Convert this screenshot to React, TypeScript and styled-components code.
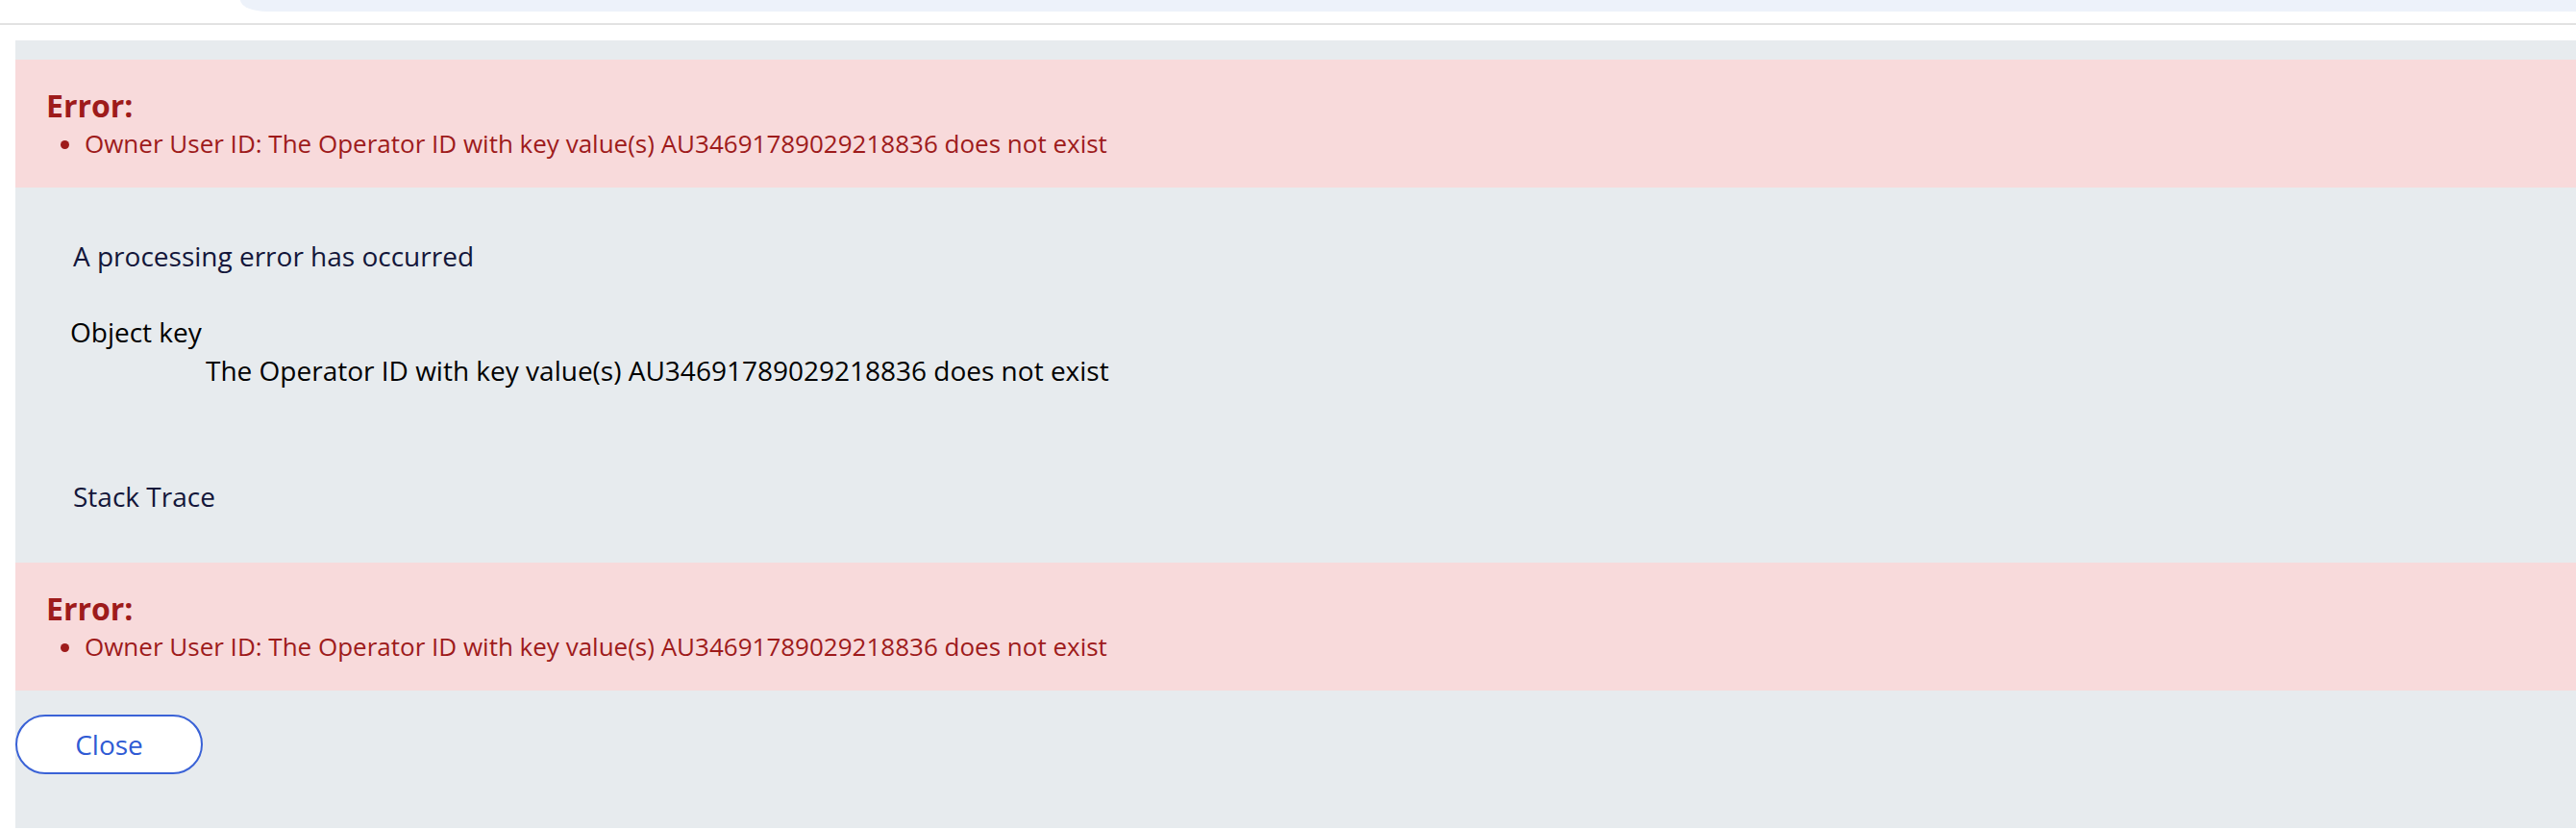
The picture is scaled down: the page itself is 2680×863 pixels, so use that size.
import React from "react";
import styled, { createGlobalStyle } from "styled-components";

const GlobalStyle = createGlobalStyle`
  html, body {
    margin: 0;
    padding: 0;
    background: #ffffff;
    font-family: "Open Sans", "Noto Sans", sans-serif;
  }
`;

const TopBar = styled.header`
  height: 24px;
  border-bottom: 2px solid #e2e2e2;
  display: flex;
  align-items: flex-start;
`;

const SearchEdge = styled.div`
  margin-left: 250px;
  flex: 1;
  height: 12px;
  background: #edf2fa;
  border-bottom-left-radius: 28px 12px;
`;

const Panel = styled.main`
  margin: 16px 0 0 16px;
  background: #e7ebee;
  padding-top: 20px;
  min-height: 819px;
  box-sizing: border-box;
`;

const ErrorBox = styled.section`
  background: #f8dadb;
  color: #9e1b1b;
  padding: 26px 32px 28px 32px;
`;

const ErrorTitle = styled.div`
  font-weight: 700;
  font-size: 32px;
  line-height: 43.6px;
`;

const ErrorList = styled.ul`
  margin: 0;
  padding: 0 0 0 40px;
  font-size: 26px;
  line-height: 35.4px;
`;

const Details = styled.section`
  padding: 51px 0 49px 0;
  color: #13163a;
  font-size: 28px;
  line-height: 40px;
`;

const Line = styled.div<{ $indent: number; $gap?: number; $dark?: boolean }>`
  margin-left: ${(p) => p.$indent}px;
  margin-top: ${(p) => p.$gap ?? 0}px;
  color: ${(p) => (p.$dark ? "#000000" : "inherit")};
`;

const Footer = styled.div`
  padding-top: 25px;
`;

const CloseButton = styled.button`
  display: block;
  width: 195px;
  height: 62px;
  border: 2px solid #3a62d6;
  border-radius: 31px;
  background: #ffffff;
  color: #2f5bd4;
  font-family: "Open Sans", "Noto Sans", sans-serif;
  font-size: 28px;
  padding: 0;
  cursor: pointer;
`;

const message =
  "Owner User ID: The Operator ID with key value(s) AU34691789029218836 does not exist";

function ErrorBanner() {
  return (
    <ErrorBox>
      <ErrorTitle>Error:</ErrorTitle>
      <ErrorList>
        <li>{message}</li>
      </ErrorList>
    </ErrorBox>
  );
}

export default function App() {
  return (
    <>
      <GlobalStyle />
      <TopBar>
        <SearchEdge />
      </TopBar>
      <Panel>
        <ErrorBanner />
        <Details>
          <Line $indent={60}>A processing error has occurred</Line>
          <Line $indent={57} $gap={39} $dark>
            Object key
          </Line>
          <Line $indent={198} $dark>
            The Operator ID with key value(s) AU34691789029218836 does not exist
          </Line>
          <Line $indent={60} $gap={91}>
            Stack Trace
          </Line>
        </Details>
        <ErrorBanner />
        <Footer>
          <CloseButton>Close</CloseButton>
        </Footer>
      </Panel>
    </>
  );
}
